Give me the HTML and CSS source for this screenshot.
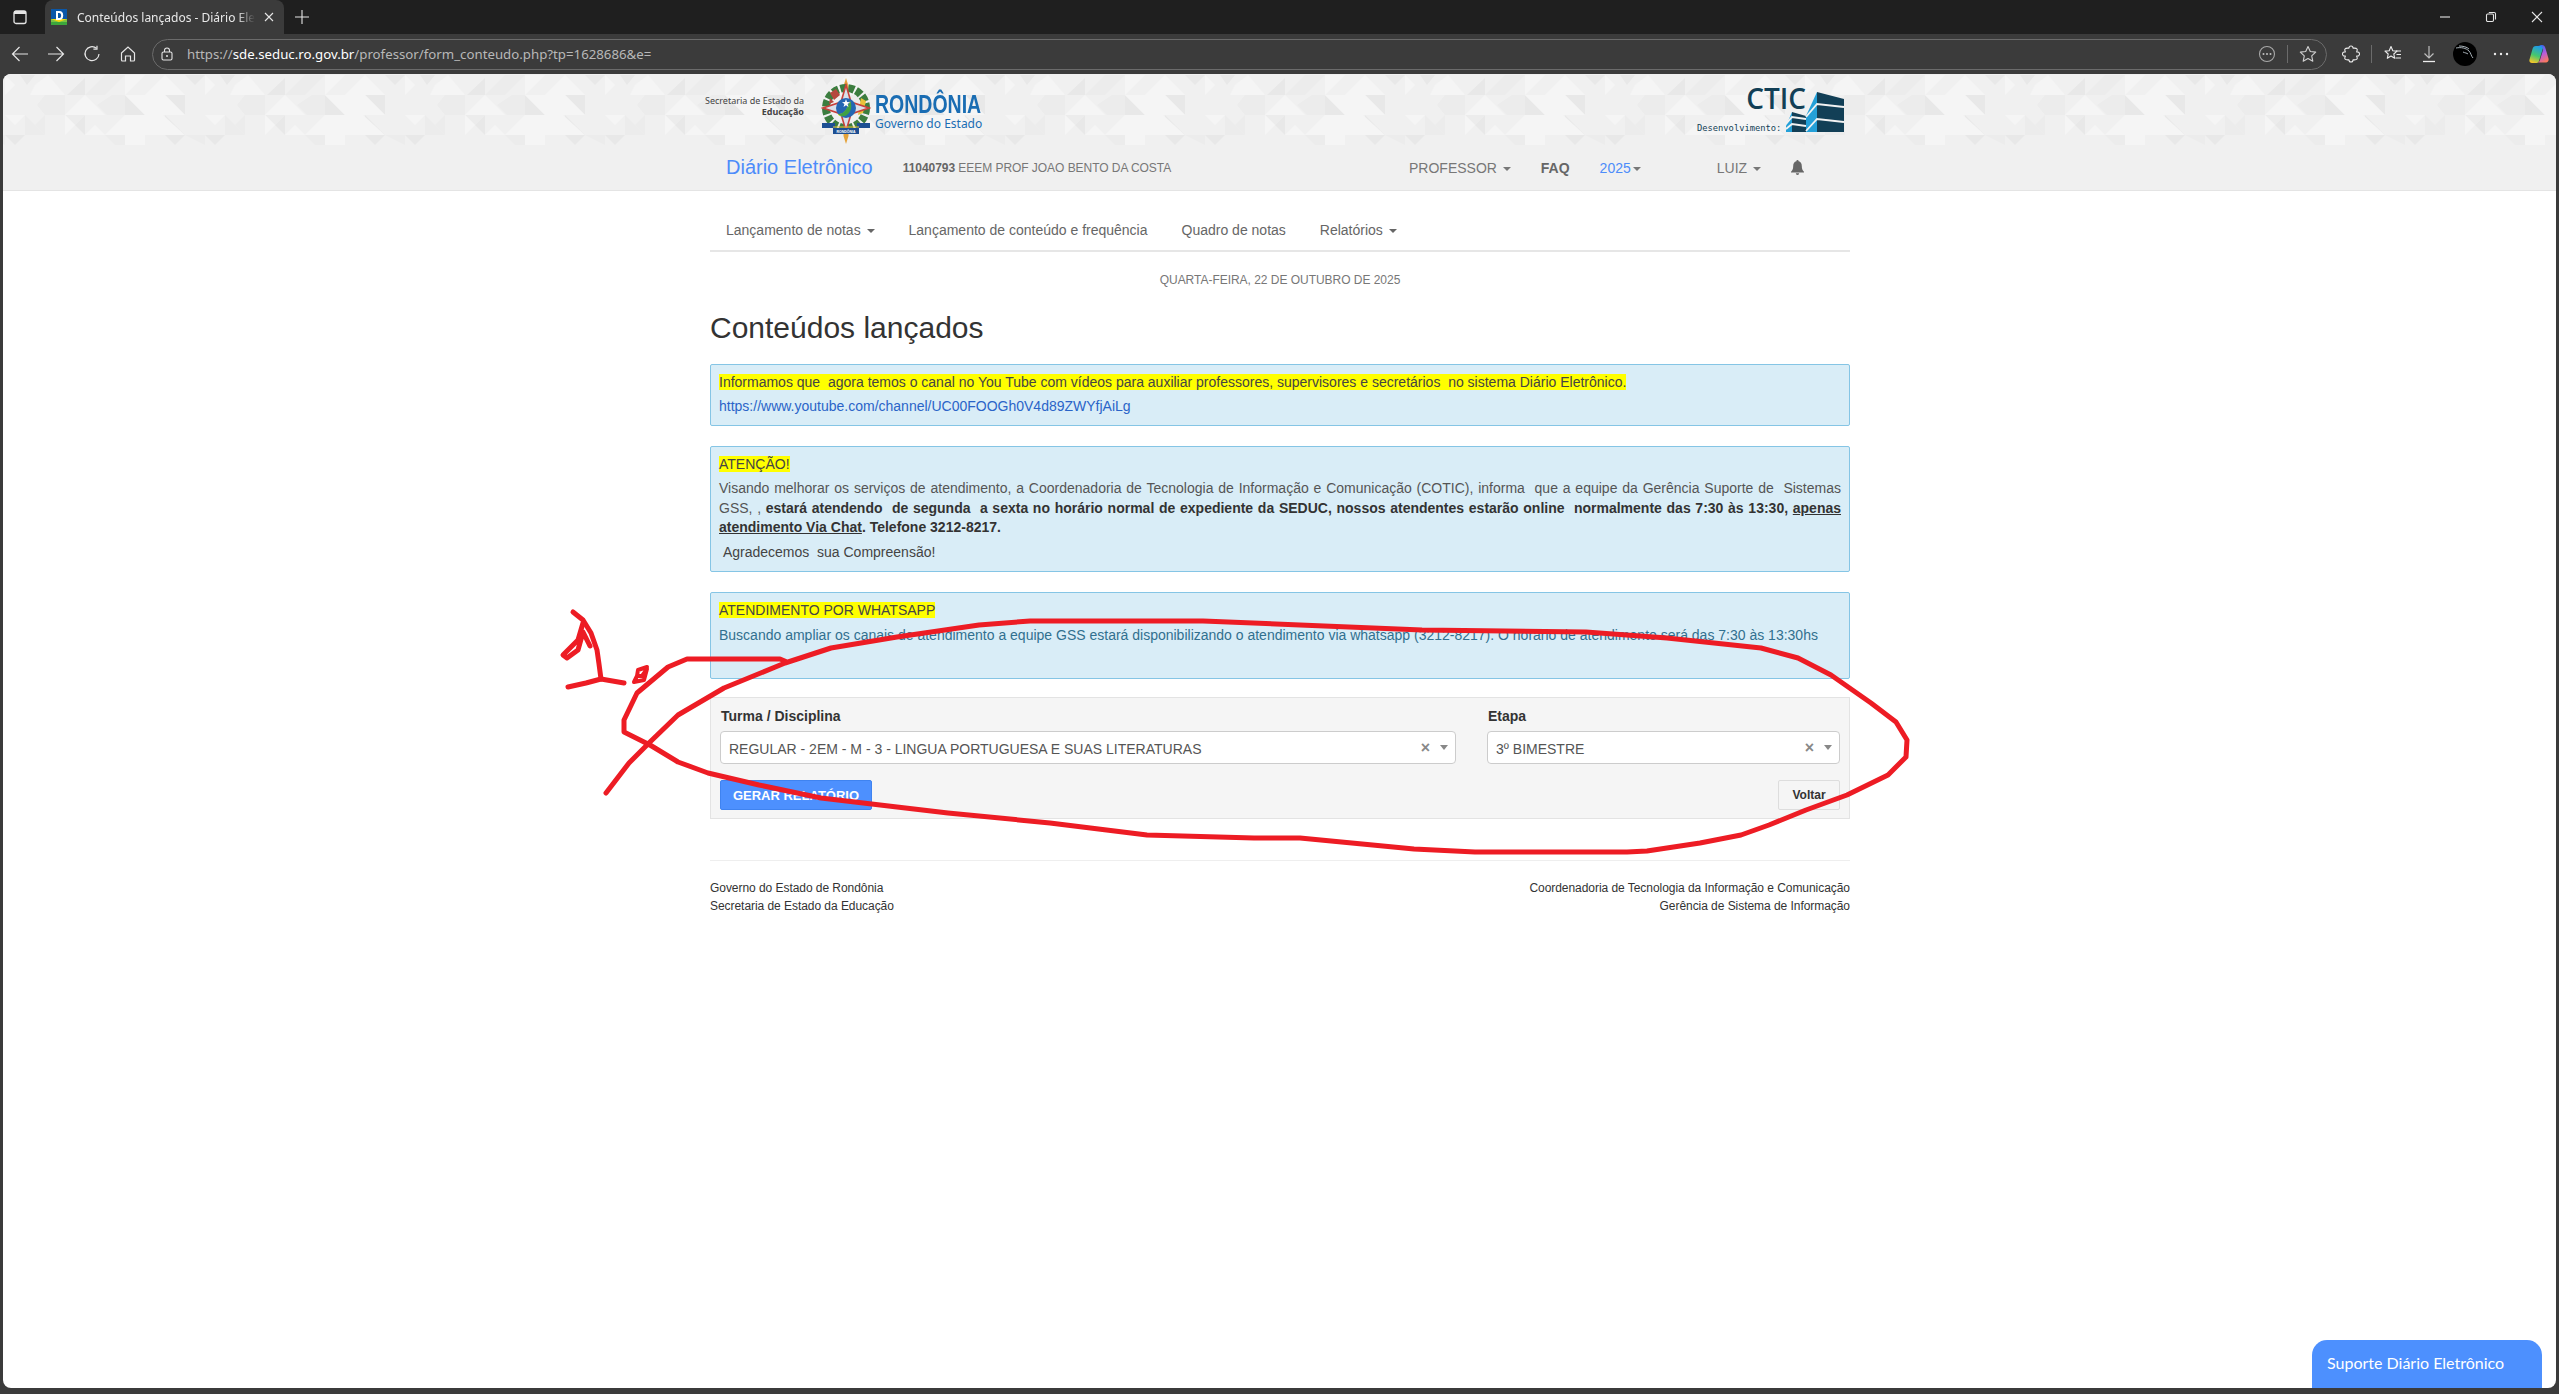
FILE: index.html
```html
<!DOCTYPE html>
<html lang="pt-BR">
    <head>
        <meta charset="UTF-8">
        <title>Conteúdos lançados - Diário Eletrônico</title>
        <link rel="stylesheet" href="styles.css">
    </head>
    <body>
        <!-- browser chrome -->
        <div class="tabbar">
            <svg class="ic sidebar-ic" width="16" height="16" viewBox="0 0 16 16"><rect x="2" y="2" width="12" height="12.5" rx="2" fill="none" stroke="#e6e6e6" stroke-width="1.3"/><rect x="2" y="2" width="12" height="3" fill="#e6e6e6"/></svg>
            <div class="tab">
                <svg class="favicon" width="16" height="16" viewBox="0 0 16 16"><rect width="16" height="10" fill="#0b57a8"/><rect y="10" width="16" height="3" fill="#f4d90e"/><rect y="13" width="16" height="3" fill="#3ca63c"/><path d="M0 10l8 3 8-3v3H0z" fill="#7cc242"/><path d="M5 2h3.4c2.6 0 3.8 1.7 3.8 4.4 0 2.8-1.3 4.6-3.8 4.6H5z" fill="#fff"/><path d="M7 4v5h1.2c1.400 0 1.900-1.100 1.900-2.600S9.600 4 8.200 4z" fill="#0b57a8"/></svg>
                <span class="tab-title">Conteúdos lançados - Diário Eletrônico</span>
                <svg class="tab-close" width="10" height="10" viewBox="0 0 10 10"><path d="M1 1l8 8M9 1l-8 8" stroke="#e6e6e6" stroke-width="1.100"/></svg>
            </div>
            <svg class="new-tab" width="14" height="14" viewBox="0 0 14 14"><path d="M7 0v14M0 7h14" stroke="#e6e6e6" stroke-width="1.100"/></svg>
            <div class="win-btns">
                <svg width="12" height="12" viewBox="0 0 12 12"><path d="M1 6h10" stroke="#e6e6e6" stroke-width="1.100"/></svg>
                <svg width="12" height="12" viewBox="0 0 12 12"><rect x="1.500" y="3" width="7" height="7.500" rx="1.200" fill="none" stroke="#e6e6e6" stroke-width="1.100"/><path d="M3.800 1.500h5.400c.8 0 1.300.5 1.300 1.300v5.700" fill="none" stroke="#e6e6e6" stroke-width="1.100"/></svg>
                <svg width="12" height="12" viewBox="0 0 12 12"><path d="M1 1l10 10M11 1L1 11" stroke="#e6e6e6" stroke-width="1.100"/></svg>
            </div>
        </div>
        <div class="toolbar">
            <div class="nav-ics">
                <svg width="18" height="18" viewBox="0 0 18 18"><path d="M17 9H1.500M8.500 2L1.500 9l7 7" fill="none" stroke="#e6e6e6" stroke-width="1.200"/></svg>
                <svg width="18" height="18" viewBox="0 0 18 18"><path d="M1 9h15.500M9.500 2l7 7-7 7" fill="none" stroke="#e6e6e6" stroke-width="1.200"/></svg>
                <svg width="18" height="18" viewBox="0 0 18 18"><path d="M13.500 3.300A7 7 0 1 0 16 9" fill="none" stroke="#e6e6e6" stroke-width="1.200"/><path d="M14 .8v3.400h-3.600" fill="none" stroke="#e6e6e6" stroke-width="1.200"/></svg>
                <svg width="18" height="18" viewBox="0 0 18 18"><path d="M2.500 8L9 2l6.500 6v7a1 1 0 0 1-1 1h-3v-5h-5v5h-3a1 1 0 0 1-1-1z" fill="none" stroke="#e6e6e6" stroke-width="1.200"/></svg>
            </div>
            <div class="urlbar">
                <svg class="lock" width="12" height="14" viewBox="0 0 12 14"><rect x="1" y="5" width="10" height="8" rx="1.500" fill="none" stroke="#e6e6e6" stroke-width="1.100"/><path d="M3.500 5V3.500a2.500 2.500 0 0 1 5 0V5" fill="none" stroke="#e6e6e6" stroke-width="1.100"/><circle cx="6" cy="9" r="1" fill="#e6e6e6"/></svg>
                <span class="url"><span class="url-dim">https://</span>sde.seduc.ro.gov.br<span class="url-dim">/professor/form_conteudo.php?tp=1628686&amp;e=</span></span>
                <svg class="url-ic" width="18" height="18" viewBox="0 0 18 18"><circle cx="9" cy="9" r="7.500" fill="none" stroke="#a8a8a8" stroke-width="1.100"/><circle cx="5.500" cy="9" r="1" fill="#c0c0c0"/><circle cx="9" cy="9" r="1" fill="#c0c0c0"/><circle cx="12.500" cy="9" r="1" fill="#c0c0c0"/></svg>
                <i class="sep"></i>
                <svg class="star" width="18" height="18" viewBox="0 0 18 18"><path d="M9 1.500l2.300 5 5.400.6-4 3.700 1.100 5.400L9 13.500l-4.800 2.700 1.100-5.400-4-3.700 5.400-.6z" fill="none" stroke="#d0d0d0" stroke-width="1.100" stroke-linejoin="round"/></svg>
            </div>
            <div class="tool-ics">
                <svg width="18" height="18" viewBox="0 0 18 18"><path d="M7 3a2 2 0 0 1 4 0c0 .5 3-.5 4 1 .8 1.200-.6 2.500-.3 3 1.600-.3 2.800.5 2.800 2s-1.200 2.300-2.800 2c-.3.500 1.100 1.800.3 3-1 1.500-4 .5-4 1a2 2 0 0 1-4 0c0-.5-3 .5-4-1-.8-1.200.6-2.500.3-3C1.700 11.300.5 10.500.5 9s1.200-2.300 2.800-2c.3-.5-1.100-1.800-.3-3 1-1.500 4-.5 4-1z" fill="none" stroke="#ededed" stroke-width="1.100"/></svg>
                <i class="sep"></i>
                <svg width="18" height="18" viewBox="0 0 18 18"><path d="M7 1.500l1.800 4.200 4.200.4-3.200 2.900.9 4.300L7 11l-3.700 2.300.9-4.300L1 6.100l4.200-.4z" fill="none" stroke="#ededed" stroke-width="1.100" stroke-linejoin="round"/><path d="M12 6h5M12.500 9.500h4.500M11.500 13H17" stroke="#ededed" stroke-width="1.100"/></svg>
                <svg class="ti-dl" width="18" height="18" viewBox="0 0 18 18"><path d="M9 1v12M4.500 8.500L9 13l4.500-4.500" fill="none" stroke="#bdbdbd" stroke-width="1.200"/><path d="M3 16.500h12" stroke="#ededed" stroke-width="1.300"/></svg>
                <svg width="24" height="24" viewBox="0 0 24 24"><circle cx="12" cy="12" r="12" fill="#000"/><path d="M3 6c5-1 10 0 13 3 2 2 2 5 4 7M6 4c4 0 8 1 10 3M15 12c-1-1-3-1-5-2" fill="none" stroke="#b9c4cc" stroke-width=".9"/></svg>
                <svg width="18" height="18" viewBox="0 0 18 18"><circle cx="3" cy="9" r="1.200" fill="#ededed"/><circle cx="9" cy="9" r="1.200" fill="#ededed"/><circle cx="15" cy="9" r="1.200" fill="#ededed"/></svg>
                <svg class="ti-cop" width="22" height="22" viewBox="0 0 22 22">
                    <defs>
                        <linearGradient id="copA" x1="0.600" y1="0" x2="0.300" y2="1"><stop offset="0" stop-color="#1f9ae8"/><stop offset=".55" stop-color="#45c76e"/><stop offset="1" stop-color="#f7c528"/></linearGradient>
                        <linearGradient id="copB" x1="0.300" y1="0" x2="0.700" y2="1"><stop offset="0" stop-color="#2a6af0"/><stop offset=".5" stop-color="#b45ce0"/><stop offset="1" stop-color="#ff7a59"/></linearGradient>
                    </defs>
                    <path d="M8 3h6c1 0 1.200 1 1 2l-4 13c-.4 1.500-1.500 2-3 2H4C2 20 1 18.500 1.500 16.500L4.500 6C5 4 6 3 8 3z" fill="url(#copA)"/>
                    <path d="M10 2h4c2 0 3 1.500 3.500 3.500l3 10c.5 2-.5 4-2.500 4H9c1.500 0 2.500-.8 3-2.500l3-10C15.500 5 14 2.500 10 2z" fill="url(#copB)"/>
                </svg>
            </div>
        </div>

        <div class="page">
            <div class="banner">
                <svg class="banner-bg" width="100%" height="71">
                    <defs>
                        <pattern id="tiles" width="200" height="71" patternUnits="userSpaceOnUse" patternTransform="translate(2 0)">
                            <g class="t1">
                                <polygon points="15,1 30,1 22,11"/>
                                <polygon points="80,4 80,21 62,21"/>
                                <polygon points="120,21 140,41 120,41"/>
                                <polygon points="160,21 180,21 180,41"/>
                                <polygon points="80,41 80,61 70,51"/>
                                <polygon points="160,41 180,61 160,61"/>
                                <polygon points="0,61 20,61 10,71"/>
                                <polygon points="160,61 180,61 170,71"/>
                                <polygon points="180,1 200,1 190,11"/>
                            </g>
                            <g class="t2">
                                <polygon points="92,31 107,21 120,21 120,41 102,41"/>
                                <polygon points="32,31 40,21 60,21 60,41 40,41"/>
                                <polygon points="60,41 80,41 70,51"/>
                                <polygon points="80,21 100,1 120,1 100,21"/>
                                <polygon points="100,61 120,61 120,71 110,71"/>
                                <polygon points="20,41 40,61 20,61"/>
                                <polygon points="40,41 40,61 30,51"/>
                                <polygon points="180,61 200,61 200,71"/>
                            </g>
                            <g class="t3">
                                <polygon points="30,11 43,1 60,21 25,21"/>
                                <polygon points="60,41 80,21 100,41"/>
                                <polygon points="120,1 140,1 120,21"/>
                                <polygon points="120,21 160,21 180,41 140,41"/>
                                <polygon points="100,61 120,41 120,61"/>
                                <polygon points="120,41 158,41 180,61 120,61"/>
                                <polygon points="120,61 140,61 140,71 120,71"/>
                                <polygon points="140,21 160,1 180,21"/>
                                <polygon points="0,41 20,41 10,51"/>
                                <polygon points="60,41 60,61 70,51"/>
                                <polygon points="80,61 100,61 90,51"/>
                                <polygon points="0,1 10,11 0,21"/>
                            </g>
                        </pattern>
                    </defs>
                    <rect width="100%" height="71" fill="url(#tiles)"/>
                </svg>
                <div class="banner-in">
                    <div class="logo-left">
                        <div class="sec-txt">Secretaria de Estado da<br><b>Educação</b></div>
                        <svg class="arms" width="50" height="66" viewBox="0 0 50 66">
                            <path d="M25 0l2.500 8v50l-2.500 8-2.500-8V8z" fill="#e5a33b"/>
                            <circle cx="25" cy="30" r="20" fill="none" stroke="#3c7d3f" stroke-width="8" stroke-dasharray="6 2"/>
                            <path d="M9 15l6-4 4 6-6 5zM13 24l-5 2 1-6z" fill="#b5483f"/>
                            <path d="M40 20l5 3-3 12-5 2z" fill="#e8c33a"/>
                            <path d="M25 7l5 17 18 6-18 6-5 17-5-17-18-6 18-6z" fill="#d8e0ea" stroke="#c8423c" stroke-width="1.600"/>
                            <circle cx="25" cy="30" r="10" fill="#2466b3"/>
                            <path d="M29 23c2 5 0 12-7 15-3 1-5-1-5-2 6 1 10-6 12-13z" fill="#f1d92b"/>
                            <path d="M17 36c5 1 10-6 12-13 2 4 2 9-2 13-3 3-7 3-10 0z" fill="#3fa045"/>
                            <path d="M25 21l1 3 3 .2-2.400 1.800.9 3-2.500-1.700-2.500 1.700.9-3-2.400-1.800 3-.2z" fill="#fff"/>
                            <path d="M1 45h13v5H1zM36 45h13v5H36z" fill="#1d4f93"/>
                            <path d="M12 50h26v6H12z" fill="#1d4f93"/>
                            <path d="M12 49h26" stroke="#e8c33a"/>
                            <text class="arms-txt" x="25" y="54.800" text-anchor="middle">RONDÔNIA</text>
                        </svg>
                        <div class="ro-txt">
                            <div class="ro-name">RONDÔNIA</div>
                            <div class="ro-sub">Governo do Estado</div>
                        </div>
                    </div>
                    <div class="logo-right">
                        <div class="ctic-name">CTIC</div>
                        <div class="ctic-dev">Desenvolvimento:</div>
                        <svg class="ctic-ic" width="60" height="43" viewBox="0 0 60 43">
                            <path d="M31 1l27 7v33H31z" fill="#123f56"/>
                            <path d="M20 41V25L31 1v40z" fill="#24a0d8"/>
                            <path d="M6 21l14 4v16H6z" fill="#123f56"/>
                            <path d="M0 41v-6l6-14v20z" fill="#24a0d8"/>
                            <path d="M20 26l11-13 27 3M20 40l11-12 27 3M0 33l6-7 14 2M0 38l6-5 14 2" fill="none" stroke="#f2f2f2" stroke-width="1.800"/>
                        </svg>
                    </div>
                </div>
            </div>
            <nav class="navbar">
                <div class="container navbar-in">
                    <a class="brand">Diário Eletrônico</a>
                    <span class="school"><b>11040793</b> EEEM PROF JOAO BENTO DA COSTA</span>
                    <div class="nav-right">
                        <a>PROFESSOR <i class="caret"></i></a>
                        <a class="nav-faq">FAQ</a>
                        <a class="nav-year">2025<i class="caret"></i></a>
                        <a class="nav-user">LUIZ <i class="caret"></i></a>
                        <svg class="bell" width="13" height="15" viewBox="0 0 13 15"><path d="M6.500 0a1.100 1.100 0 0 1 1.100 1.200C9.800 1.700 10.800 3.600 10.800 6c0 3 .8 4.600 2.200 5.800v.7H0v-.7C1.400 10.600 2.200 9 2.200 6c0-2.400 1-4.300 3.200-4.800A1.100 1.100 0 0 1 6.500 0zM4.800 13.300h3.400a1.700 1.700 0 0 1-3.400 0z" fill="#666"/></svg>
                    </div>
                </div>
            </nav>

            <div class="container">
                <ul class="subnav">
                    <li>Lançamento de notas <i class="caret"></i></li>
                    <li>Lançamento de conteúdo e frequência</li>
                    <li>Quadro de notas</li>
                    <li>Relatórios <i class="caret"></i></li>
                </ul>
                <div class="date">QUARTA-FEIRA, 22 DE OUTUBRO DE 2025</div>
                <h1>Conteúdos lançados</h1>

                <div class="alert alert-first">
                    <p><mark>Informamos que &nbsp;agora temos o canal no You Tube com vídeos para auxiliar professores, supervisores e secretários &nbsp;no sistema Diário Eletrônico.</mark></p>
                    <p class="gap"><a class="link">https://www.youtube.com/channel/UC00FOOGh0V4d89ZWYfjAiLg</a></p>
                </div>
                <div class="alert">
                    <p><mark>ATENÇÃO!</mark></p>
                    <p class="gap just">Visando melhorar os serviços de atendimento, a Coordenadoria de Tecnologia de Informação e Comunicação (COTIC), informa &nbsp;que a equipe da Gerência Suporte de &nbsp;Sistemas GSS, , <b>estará atendendo &nbsp;de segunda &nbsp;a sexta no horário normal de expediente da SEDUC, nossos atendentes estarão online &nbsp;normalmente das 7:30 às 13:30, <u>apenas atendimento Via Chat</u>. Telefone 3212-8217.</b></p>
                    <p class="thanks">&nbsp;Agradecemos &nbsp;sua Compreensão!</p>
                </div>
                <div class="alert alert-last">
                    <p><mark>ATENDIMENTO POR WHATSAPP</mark></p>
                    <p class="gap">Buscando ampliar os canais de atendimento a equipe GSS estará disponibilizando o atendimento via whatsapp (3212-8217). O horário de atendimento será das 7:30 às 13:30hs</p>
                </div>

                <form class="well">
                    <div class="fields">
                        <div>
                            <label>Turma / Disciplina</label>
                            <div class="select"><span>REGULAR - 2EM - M - 3 - LINGUA PORTUGUESA E SUAS LITERATURAS</span><i class="clear">×</i><i class="caret"></i></div>
                        </div>
                        <div>
                            <label>Etapa</label>
                            <div class="select"><span>3º BIMESTRE</span><i class="clear">×</i><i class="caret"></i></div>
                        </div>
                    </div>
                    <div class="actions">
                        <button type="button" class="btn-primary">GERAR RELATÓRIO</button>
                        <button type="button" class="btn-back">Voltar</button>
                    </div>
                </form>

                <footer class="foot">
                    <div>Governo do Estado de Rondônia<br>Secretaria de Estado da Educação</div>
                    <div class="foot-r">Coordenadoria de Tecnologia da Informação e Comunicação<br>Gerência de Sistema de Informação</div>
                </footer>
            </div>
            <div class="support">Suporte Diário Eletrônico</div>
        </div>

        <!-- hand drawn marks over the screenshot -->
        <svg class="marks" width="2559" height="1394" viewBox="0 0 2559 1394">
            <polyline points="606,793 629,763 650,742 678,715 724,688 785,663 831,648 897,637 979,625 1030,621 1203,621 1300,625 1422,630 1586,632 1667,638 1761,648 1798,658 1831,675 1871,703 1896,722 1907,740 1906,757 1888,775 1847,795 1806,810 1769,825 1741,835 1700,843 1647,851 1627,852 1475,852 1414,849 1300,838 1254,838 1147,835 1050,823 948,813 897,807 821,798 759,785 708,773 678,762 650,745 624,732 624,720 637,693 668,667 687,659 780,659 787,662"/>
            <polyline points="573,612 583,620 591,633 597,650 599,664 601,679"/>
            <polyline points="583,623 578,640 563,655 567,658 578,650 583,632 590,646"/>
            <polyline points="568,687 586,683 601,679 624,683"/>
            <polyline class="thin" points="647,667 638,670 637,676 642,676 647,669 644,680 634,682 637,676"/>
        </svg>
    </body>
</html>
```

FILE: styles.css
```css
html, body { margin: 0; height: 100%; overflow: hidden; }
body { background: #3b3b3b; font-family: "Liberation Sans", Arial, sans-serif; font-size: 14px; color: #333; display: flex; flex-direction: column; position: relative; }
i { font-style: normal; }

/* browser chrome */
.tabbar { height: 34px; background: #1f1f1f; display: flex; align-items: center; flex: none; }
.sidebar-ic { margin-left: 12px; }
.tab { width: 239px; height: 34px; margin-left: 17px; background: #3b3b3b; border-radius: 8px 8px 0 0; display: flex; align-items: center; box-sizing: border-box; padding-left: 6px; }
.tab-title { width: 178px; margin-left: 10px; overflow: hidden; white-space: nowrap; color: #e8e8e8; font-family: "Noto Sans", sans-serif; font-size: 12px; -webkit-mask-image: linear-gradient(to right, #000 90%, transparent); mask-image: linear-gradient(to right, #000 90%, transparent); }
.tab-close { margin-left: 9px; }
.new-tab { margin-left: 11px; }
.win-btns { margin-left: auto; display: flex; gap: 34px; padding-right: 16px; }

.toolbar { height: 40px; background: #3b3b3b; display: flex; align-items: center; flex: none; }
.nav-ics { display: flex; gap: 18px; margin-left: 11px; width: 141px; }
.urlbar { width: 2175px; height: 31px; box-sizing: border-box; border: 1px solid #6b6b6b; border-radius: 16px; display: flex; align-items: center; }
.lock { margin-left: 8px; }
.url { margin-left: 14px; color: #fff; font-family: "Noto Sans", sans-serif; font-size: 13.250px; white-space: nowrap; }
.url-dim { color: #b8b8b8; }
.url-ic { margin-left: auto; }
.sep { width: 1px; height: 18px; background: #6b6b6b; margin: 0 11px; }
.star { margin-right: 9px; }
.tool-ics { display: flex; align-items: center; margin-left: 15px; gap: 15px; }
.tool-ics .sep { margin: 0 -3px 0 -4px; }
.ti-dl, .ti-cop { margin-left: 3px; }

/* page */
.page { flex: 1; margin: 0 3px 6px; background: #fff; border-radius: 8px; overflow: hidden; position: relative; }
.container { width: 1140px; margin-left: 707px; }

.banner { height: 71px; background: #f0f0f0; position: relative; }
.banner-bg { position: absolute; left: 0; top: 0; }
.t1 { fill: #e8e8e8; }
.t2 { fill: #ececec; }
.t3 { fill: #f5f5f5; }
.banner-in { position: relative; width: 1141px; margin-left: 702px; height: 71px; display: flex; justify-content: space-between; }
.logo-left { display: flex; }
.sec-txt { margin-top: 21px; width: 99px; text-align: right; font-family: "Noto Sans", sans-serif; font-size: 9px; line-height: 11px; color: #444; white-space: nowrap; }
.sec-txt b { font-weight: 700; }
.arms { margin: 4px 0 0 17px; }
.arms-txt { font-family: "Liberation Sans", sans-serif; font-size: 3.500px; font-weight: 700; fill: #fff; }
.ro-txt { margin: 18px 0 0 4px; width: 106px; color: #1a6db3; font-family: "Noto Sans", sans-serif; }
.ro-name { font-family: "Liberation Sans", sans-serif; font-weight: 700; font-size: 25px; line-height: 25px; transform: scaleX(.78); transform-origin: left; }
.ro-sub { font-size: 12px; line-height: 13px; white-space: nowrap; }
.logo-right { position: relative; width: 150px; }
.ctic-name { position: absolute; right: 40px; top: 8px; font-family: "Open Sans", sans-serif; font-weight: 600; font-size: 28px; line-height: 32px; color: #123f56; }
.ctic-dev { position: absolute; left: 1px; top: 48px; font-family: "DejaVu Sans Mono", monospace; font-size: 8.750px; line-height: 12px; color: #123f56; white-space: nowrap; }
.ctic-ic { position: absolute; right: 0; top: 17px; }

.navbar { height: 46px; box-sizing: border-box; background: #f0f0f0; border-bottom: 1px solid #e4e4e4; }
.navbar-in { height: 45px; display: flex; align-items: center; }
.brand { margin-left: 16px; font-size: 20px; color: #4d8cfa; }
.school { margin-left: 30px; font-size: 12px; letter-spacing: -.05px; color: #777; }
.school b { color: #666; }
.nav-right { margin-left: auto; margin-right: 46px; display: flex; align-items: center; gap: 30px; color: #777; }
.nav-faq { font-weight: 700; color: #666; }
.nav-year { color: #4d8cfa; }
.nav-year .caret { margin-left: 2px; color: #777; }
.nav-user { margin-left: 46px; }
.caret { display: inline-block; width: 0; height: 0; margin-left: 2px; vertical-align: middle; border-top: 4px solid; border-left: 4px solid transparent; border-right: 4px solid transparent; }

.subnav { list-style: none; margin: 0; padding: 0 0 0 16px; height: 61px; box-sizing: border-box; border-bottom: 2px solid #e6e6e6; display: flex; gap: 34px; align-items: center; color: #666; position: relative; }
.subnav li { padding-top: 19px; }
.date { margin-top: 20px; text-align: center; font-size: 12px; letter-spacing: -.03px; line-height: 17px; color: #777; }
h1 { margin: 21px 0 0; font-size: 30px; font-weight: 400; line-height: 36px; color: #333; }

.alert { margin-top: 20px; box-sizing: border-box; background: #d9edf7; border: 1px solid #85c5e5; border-radius: 2px; padding: 7px 8px 9px; color: #555; line-height: 20px; }
.alert p { margin: 0; }
.alert .gap { margin-top: 5px; }
.alert-first { margin-top: 18px; color: #333; }
.alert-first .gap { margin-top: 4px; }
.just { text-align: justify; line-height: 19.500px; }
.alert b { color: #333; }
.alert mark { background: #ff0; color: #444; }
.link { color: #2a64c8; }
.alert .thanks { margin-top: 4.500px; color: #444; }
.alert-last { padding-bottom: 33px; color: #31708f; }

.well { margin-top: 18px; box-sizing: border-box; height: 122px; background: #f5f5f5; border: 1px solid #e3e3e3; padding: 8px 9px; }
.fields { display: grid; grid-template-columns: 736px 353px; gap: 31px; }
label { display: block; font-weight: 700; line-height: 20px; height: 25px; color: #333; padding-left: 1px; }
.select { height: 33px; box-sizing: border-box; background: #fff; border: 1px solid #ccc; border-radius: 4px; display: flex; align-items: center; padding: 0 7px 0 8px; color: #555; }
.select span { flex: 1; padding-top: 2px; }
.clear { font-weight: 700; font-size: 16px; color: #888; margin-right: 10px; }
.select .caret { color: #888; margin: 0; border-top-width: 5px; }
.actions { display: flex; justify-content: space-between; margin-top: 16px; }
button { height: 30px; box-sizing: border-box; font-family: "Liberation Sans", Arial, sans-serif; border-radius: 2px; padding: 0; }
.btn-primary { width: 152px; background: #4d90fe; border: 1px solid #3f83f0; color: #fff; font-weight: 700; font-size: 13px; }
.btn-back { width: 62px; background: #f5f5f5; border: 1px solid #ddd; color: #333; font-weight: 700; font-size: 12px; }

.foot { margin-top: 41px; padding-top: 19px; border-top: 1px solid #eee; display: flex; justify-content: space-between; font-size: 12px; letter-spacing: -.05px; line-height: 17.500px; color: #333; }
.foot-r { text-align: right; }

.support { position: absolute; right: 14px; bottom: 0; width: 230px; height: 48px; box-sizing: border-box; padding: 12px 15px; background: #4d90fe; border-radius: 15px 15px 0 0; color: #fff; font-family: Lato, sans-serif; font-size: 16px; line-height: 22px; }

.marks { position: absolute; left: 0; top: 0; pointer-events: none; }
.marks polyline { fill: none; stroke: #ed1c24; stroke-width: 5; stroke-linejoin: round; stroke-linecap: round; }
.marks .thin { stroke-width: 4; }
```
